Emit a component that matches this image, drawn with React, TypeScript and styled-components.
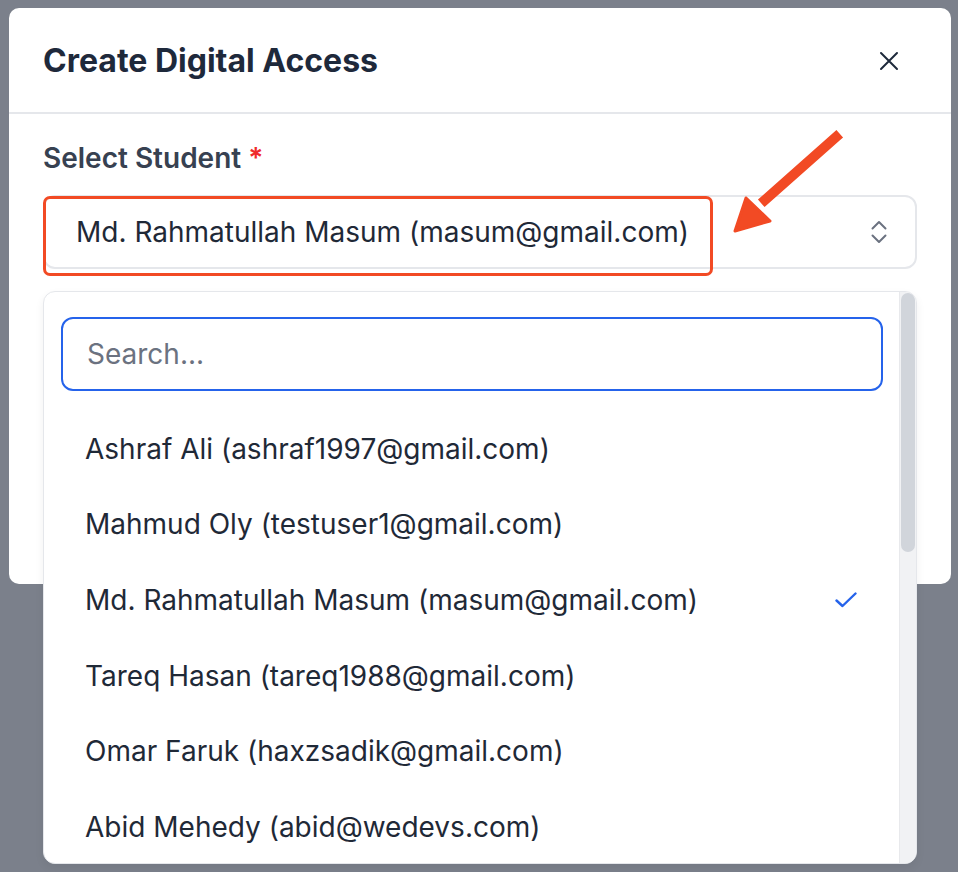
import React from "react";
import styled, { createGlobalStyle } from "styled-components";

const GlobalStyle = createGlobalStyle`
  html, body { margin: 0; padding: 0; }
  body {
    background: #7b808b;
    font-family: Inter, "Noto Sans", sans-serif;
    -webkit-font-smoothing: antialiased;
  }
`;

const Page = styled.div`
  width: 958px;
  height: 872px;
  overflow: hidden;
  padding: 8px 7px 0 9px;
  box-sizing: border-box;
`;

const Dialog = styled.div`
  position: relative;
  width: 942px;
  min-height: 576px;
  background: #ffffff;
  border-radius: 10px;
  box-sizing: border-box;
`;

const Header = styled.div`
  height: 106px;
  display: flex;
  align-items: center;
  justify-content: space-between;
  padding: 2px 52px 0 34px;
  border-bottom: 2px solid #e5e7eb;
  box-sizing: border-box;
`;

const Title = styled.h2`
  margin: 0;
  font-size: 32px;
  font-weight: 700;
  color: #1e293b;
  line-height: 40px;
`;

const CloseButton = styled.button`
  border: 0;
  background: transparent;
  padding: 0;
  width: 20px;
  height: 20px;
  display: flex;
  align-items: center;
  justify-content: center;
  color: #1e293b;
`;

const Body = styled.div`
  padding: 26px 34px 0 34px;
`;

const Label = styled.div`
  font-size: 28px;
  font-weight: 600;
  color: #374151;
  line-height: 36px;
  margin-bottom: 19px;
`;

const Required = styled.span`
  color: #ef2b2b;
`;

const Field = styled.div`
  position: relative;
`;

const SelectBox = styled.div`
  height: 74px;
  border: 2px solid #e5e7eb;
  border-radius: 12px;
  display: flex;
  align-items: center;
  justify-content: space-between;
  padding: 0 28px 0 31px;
  box-sizing: border-box;
  font-size: 28px;
  color: #1f2937;
`;

const Highlight = styled.div`
  position: absolute;
  left: 0;
  top: 1px;
  width: 670px;
  height: 80px;
  border: 3px solid #f24a24;
  border-radius: 7px;
  box-sizing: border-box;
  pointer-events: none;
`;

const Arrow = styled.svg`
  position: absolute;
  left: 680px;
  top: -70px;
  width: 140px;
  height: 120px;
  overflow: visible;
  pointer-events: none;
`;

const Dropdown = styled.div`
  position: absolute;
  left: 0;
  top: 96px;
  width: 874px;
  height: 573px;
  background: #ffffff;
  border: 1px solid #e5e7eb;
  border-radius: 12px;
  box-sizing: border-box;
  display: grid;
  grid-template-columns: 1fr 17px;
  overflow: hidden;
  box-shadow: 0 4px 10px rgba(0, 0, 0, 0.06);
`;

const DropdownContent = styled.div`
  padding: 25px 16px 0 17px;
  overflow: hidden;
`;

const SearchInput = styled.input`
  display: block;
  width: 100%;
  height: 74px;
  box-sizing: border-box;
  border: 2px solid #2563eb;
  border-radius: 12px;
  outline: none;
  padding: 0 24px;
  font-family: inherit;
  font-size: 28px;
  color: #1f2937;
  &::placeholder { color: #6b7280; }
`;

const List = styled.ul`
  list-style: none;
  margin: 20px 0 0 0;
  padding: 0;
`;

const Option = styled.li`
  height: 75.6px;
  display: flex;
  align-items: center;
  justify-content: space-between;
  padding: 0 26px 0 24px;
  font-size: 28px;
  color: #1f2937;
`;

const Track = styled.div`
  background: #f1f2f4;
  border-left: 1px solid #e8e9ec;
  padding-top: 1px;
`;

const Thumb = styled.div`
  height: 259px;
  margin: 0 1px;
  background: #d1d5db;
  border-radius: 8px;
`;

const students = [
  { name: "Ashraf Ali", email: "ashraf1997@gmail.com" },
  { name: "Mahmud Oly", email: "testuser1@gmail.com" },
  { name: "Md. Rahmatullah Masum", email: "masum@gmail.com", selected: true },
  { name: "Tareq Hasan", email: "tareq1988@gmail.com" },
  { name: "Omar Faruk", email: "haxzsadik@gmail.com" },
  { name: "Abid Mehedy", email: "abid@wedevs.com" },
];

export default function App() {
  return (
    <>
      <GlobalStyle />
      <Page>
        <Dialog>
          <Header>
            <Title>Create Digital Access</Title>
            <CloseButton aria-label="Close">
              <svg width="20" height="20" viewBox="0 0 20 20" fill="none" stroke="currentColor" strokeWidth="2" strokeLinecap="round">
                <path d="M2 2L18 18M18 2L2 18" />
              </svg>
            </CloseButton>
          </Header>
          <Body>
            <Label>
              Select Student <Required>*</Required>
            </Label>
            <Field>
              <SelectBox>
                <span>Md. Rahmatullah Masum (masum@gmail.com)</span>
                <svg width="16" height="24" viewBox="0 0 16 24" fill="none" stroke="#6b7280" strokeWidth="2" strokeLinecap="round" strokeLinejoin="round">
                  <path d="M1.5 8.5L8 2L14.5 8.5" />
                  <path d="M1.5 15.5L8 22L14.5 15.5" />
                </svg>
              </SelectBox>
              <Highlight />
              <Arrow viewBox="0 0 140 120">
                <line x1="113" y1="12" x2="42" y2="75" stroke="#f24a24" strokeWidth="10" strokeLinecap="square" />
                <polygon points="12,106 23,73 47,96" fill="#f24a24" stroke="#f24a24" strokeWidth="3" strokeLinejoin="round" />
              </Arrow>
              <Dropdown>
                <DropdownContent>
                  <SearchInput placeholder="Search..." />
                  <List>
                    {students.map((s) => (
                      <Option key={s.email}>
                        <span>
                          {s.name} ({s.email})
                        </span>
                        {s.selected && (
                          <svg width="22" height="16" viewBox="0 0 22 16" fill="none" stroke="#2563eb" strokeWidth="2.4" strokeLinecap="round" strokeLinejoin="round">
                            <path d="M1.5 8.5L7.5 14L20.5 1.5" />
                          </svg>
                        )}
                      </Option>
                    ))}
                  </List>
                </DropdownContent>
                <Track>
                  <Thumb />
                </Track>
              </Dropdown>
            </Field>
          </Body>
        </Dialog>
      </Page>
    </>
  );
}
